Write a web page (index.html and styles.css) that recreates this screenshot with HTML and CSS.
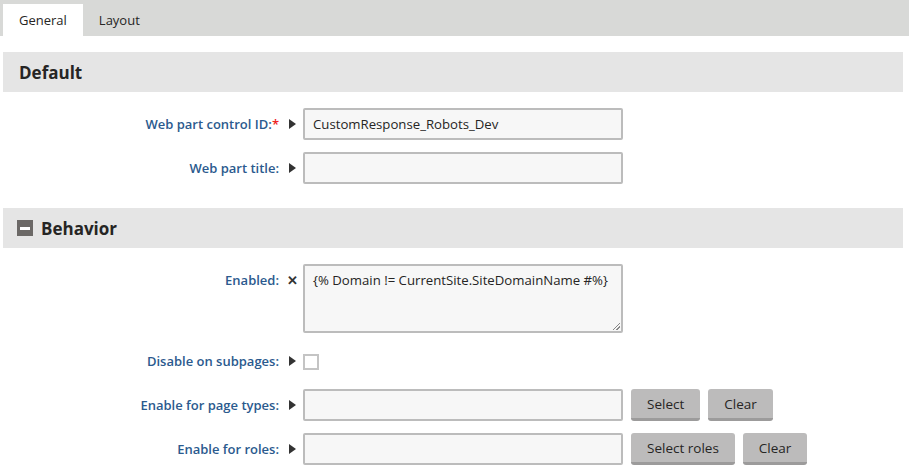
FILE: index.html
```html
<!DOCTYPE html>
<html>
<head>
<meta charset="utf-8">
<link rel="stylesheet" href="styles.css">
</head>
<body>
<div class="tabbar">
  <div class="tab active">General</div>
  <div class="tab">Layout</div>
</div>
<div class="page">
  <div class="section-head"><span class="section-title">Default</span></div>
  <div class="rows">
    <div class="row">
      <div class="label">Web part control ID:<span class="req">*</span></div>
      <div class="marker"><span class="arrow"></span></div>
      <div class="field"><div class="input">CustomResponse_Robots_Dev</div></div>
    </div>
    <div class="row">
      <div class="label">Web part title:</div>
      <div class="marker"><span class="arrow"></span></div>
      <div class="field"><div class="input"></div></div>
    </div>
  </div>

  <div class="section-head"><span class="collapse"><span class="bar"></span></span><span class="section-title">Behavior</span></div>
  <div class="rows">
    <div class="row">
      <div class="label">Enabled:</div>
      <div class="marker"><span class="cross">✕</span></div>
      <div class="field"><div class="input textarea">{% Domain != CurrentSite.SiteDomainName #%}<span class="grip"></span></div></div>
    </div>
    <div class="row">
      <div class="label">Disable on subpages:</div>
      <div class="marker"><span class="arrow"></span></div>
      <div class="field"><span class="checkbox"></span></div>
    </div>
    <div class="row">
      <div class="label">Enable for page types:</div>
      <div class="marker"><span class="arrow"></span></div>
      <div class="field"><div class="input"></div><button class="btn">Select</button><button class="btn">Clear</button></div>
    </div>
    <div class="row">
      <div class="label">Enable for roles:</div>
      <div class="marker"><span class="arrow"></span></div>
      <div class="field"><div class="input"></div><button class="btn">Select roles</button><button class="btn">Clear</button></div>
    </div>
  </div>
</div>
</body>
</html>
```
FILE: styles.css
```css
* { box-sizing: border-box; }
body {
  margin: 0;
  font-family: "Open Sans", "Noto Sans", sans-serif;
  font-size: 13px;
  color: #262524;
  background: #fff;
}
.tabbar {
  height: 36px;
  background: #d8d9d7;
  display: flex;
  align-items: flex-end;
  padding-left: 3px;
}
.tab {
  height: 32px;
  line-height: 32px;
  padding: 0 16px;
  color: #262524;
}
.tab.active { background: #fff; }
.page { padding: 16px 6px 0 3px; }
.section-head {
  height: 40px;
  background: #e5e5e5;
  display: flex;
  align-items: center;
  padding-left: 16px;
}
.section-title {
  font-size: 17px;
  font-weight: 700;
  color: #262524;
}
.collapse {
  width: 16px;
  height: 16px;
  background: #6b6866;
  margin-left: -2px;
  margin-right: 8px;
  display: flex;
  align-items: center;
  justify-content: center;
}
.collapse .bar {
  width: 10px;
  height: 3px;
  background: #fff;
}
.rows {
  padding: 16px 0 24px;
  display: flex;
  flex-direction: column;
  gap: 12px;
}
.row {
  display: flex;
  align-items: flex-start;
}
.label {
  width: 276px;
  text-align: right;
  line-height: 32px;
  color: #2b5a8e;
  font-weight: 600;
  font-size: 13px;
  white-space: nowrap;
}
.req { color: #e22; }
.marker {
  width: 24px;
  height: 32px;
  display: flex;
  align-items: center;
  padding-left: 10px;
}
.arrow {
  width: 0;
  height: 0;
  border-top: 5.5px solid transparent;
  border-bottom: 5.5px solid transparent;
  border-left: 7px solid #333;
}
.cross {
  font-size: 13px;
  font-weight: 700;
  color: #333;
  margin-left: -2px;
}
.field {
  display: flex;
  align-items: center;
  min-height: 32px;
}
.input {
  width: 320px;
  height: 32px;
  border: 2px solid #bcbcbc;
  border-radius: 2px;
  background: #f7f7f7;
  padding: 0 8px;
  line-height: 28px;
  font-size: 13.2px;
  color: #262524;
}
.textarea {
  height: 69px;
  position: relative;
  line-height: 28px;
}
.grip {
  position: absolute;
  right: 1px;
  bottom: 1px;
  width: 7px;
  height: 7px;
  background: linear-gradient(135deg, transparent 45%, #888 45%, #888 55%, transparent 55%, transparent 70%, #888 70%, #888 80%, transparent 80%);
}
.checkbox {
  width: 16px;
  height: 16px;
  border: 2px solid #c4c4c4;
  background: #fff;
  margin-top: 1px;
}
.btn {
  height: 32px;
  border: 0;
  border-bottom: 3px solid #9c9b9b;
  border-radius: 3px;
  background: #bcbbbb;
  font-family: inherit;
  font-size: 13.5px;
  color: #262524;
  padding: 0 16px;
  margin-left: 8px;
  cursor: pointer;
}
```
